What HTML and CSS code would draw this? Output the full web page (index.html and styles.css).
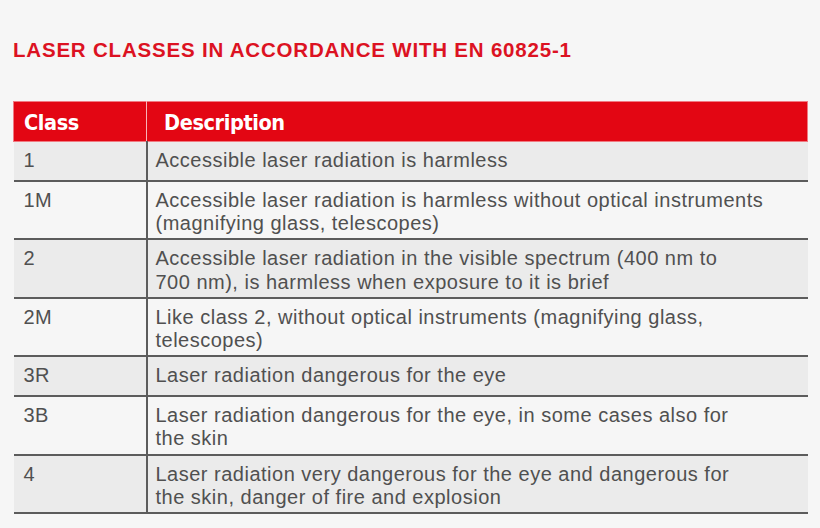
FILE: index.html
```html
<!DOCTYPE html>
<html lang="en">
<head>
<meta charset="utf-8">
<title>Laser classes</title>
<link rel="stylesheet" href="styles.css">
</head>
<body>
<div class="page">
  <h1 class="title">LASER CLASSES IN ACCORDANCE WITH EN 60825-1</h1>
  <table class="classes">
    <thead>
      <tr>
        <th class="col-class">Class</th>
        <th class="col-desc">Description</th>
      </tr>
    </thead>
    <tbody>
      <tr class="shade"><td class="c">1</td><td class="d">Accessible laser radiation is harmless</td></tr>
      <tr><td class="c">1M</td><td class="d">Accessible laser radiation is harmless without optical instruments<br>(magnifying glass, telescopes)</td></tr>
      <tr class="shade"><td class="c">2</td><td class="d">Accessible laser radiation in the visible spectrum (400 nm to<br>700 nm), is harmless when exposure to it is brief</td></tr>
      <tr><td class="c">2M</td><td class="d">Like class 2, without optical instruments (magnifying glass,<br>telescopes)</td></tr>
      <tr class="shade"><td class="c">3R</td><td class="d">Laser radiation dangerous for the eye</td></tr>
      <tr><td class="c">3B</td><td class="d">Laser radiation dangerous for the eye, in some cases also for<br>the skin</td></tr>
      <tr class="shade"><td class="c">4</td><td class="d">Laser radiation very dangerous for the eye and dangerous for<br>the skin, danger of fire and explosion</td></tr>
    </tbody>
  </table>
</div>
</body>
</html>
```

FILE: styles.css
```css
html, body {
  margin: 0;
  padding: 0;
  background: #f6f6f6;
}

.page {
  padding: 38px 12px 0 13px;
  font-family: "Liberation Sans", Arial, sans-serif;
}

.title {
  margin: 0 0 39px 0;
  font-size: 20.5px;
  line-height: 24px;
  font-weight: bold;
  letter-spacing: 0.8px;
  color: #dc1222;
}

.classes {
  width: 795px;
  border-collapse: collapse;
  border-spacing: 0;
}

.classes th {
  background: #e30613;
  color: #ffffff;
  font-family: "DejaVu Sans Condensed", "DejaVu Sans", sans-serif;
  font-stretch: condensed;
  font-weight: bold;
  font-size: 21.5px;
  letter-spacing: -0.4px;
  line-height: 24px;
  height: 40px;
  box-sizing: border-box;
  padding: 6px 10px 4px;
  text-align: left;
  border-top: 1px solid #f07a82;
  border-bottom: 1px solid #f07a82;
}

.classes th.col-class {
  width: 133px;
  border-left: 1px solid #f07a82;
  border-right: 1px solid #f7b3b8;
}

.classes th.col-desc {
  padding-left: 17px;
  border-right: 1px solid #f07a82;
}

.classes td {
  font-size: 20px;
  line-height: 23.2px;
  letter-spacing: 0.5px;
  color: #505050;
  vertical-align: top;
  height: 28px;
  padding: 7px 10px 3px;
  border-bottom: 2px solid #5c5c5c;
}

.classes td.c {
  border-right: 2px solid #5c5c5c;
}

.classes td.d {
  padding-left: 8px;
}

.classes tr.shade td {
  background: #ebebeb;
}
```
